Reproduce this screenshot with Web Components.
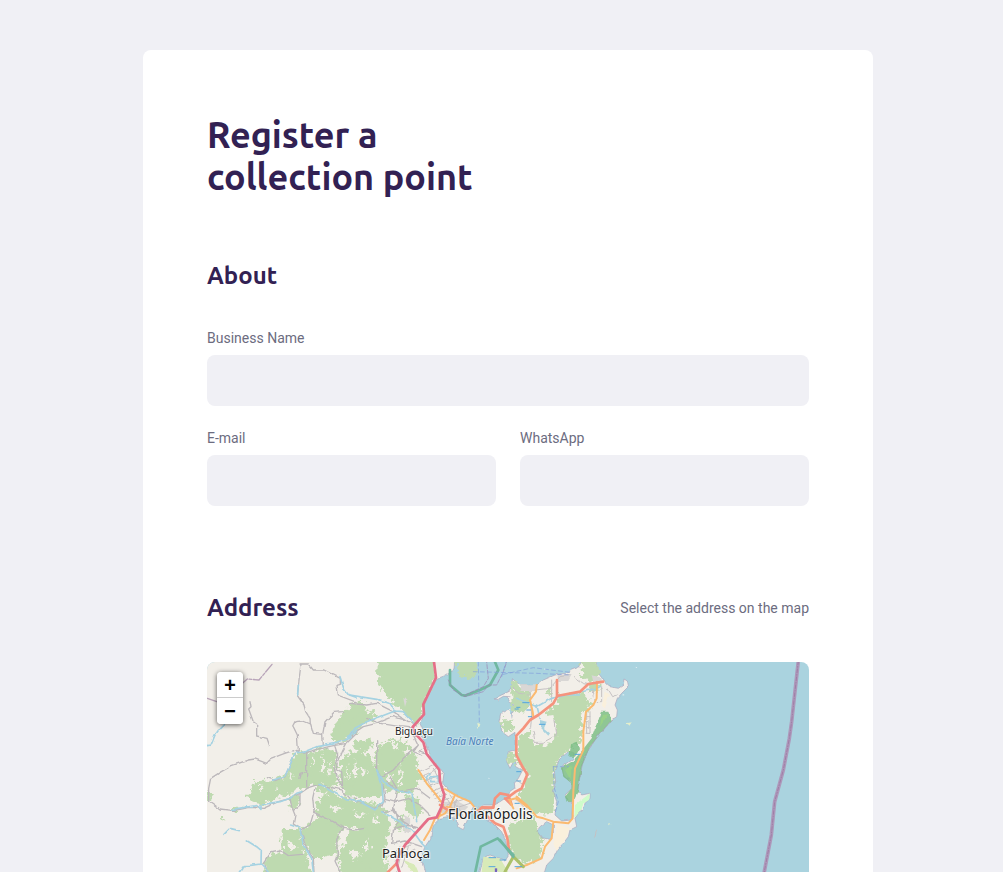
<!DOCTYPE html>
<html lang="en">
<head>
<meta charset="utf-8">
<meta name="viewport" content="width=device-width, initial-scale=1">
<title>Register a collection point</title>
<style>
  body { margin: 0; background: #f0f0f5; font-family: Roboto, "Liberation Sans", sans-serif; color: #6c6c80; }
</style>
</head>
<body>
<register-page>
  <form-section heading="About">
    <text-field label="Business Name" name="name"></text-field>
    <field-row>
      <text-field label="E-mail" name="email" type="email"></text-field>
      <text-field label="WhatsApp" name="whatsapp" type="tel"></text-field>
    </field-row>
  </form-section>
  <form-section heading="Address" hint="Select the address on the map">
    <area-map></area-map>
  </form-section>
</register-page>

<template id="t-page">
  <style>
    :host { display: block; padding: 50px 0 0 13px; }
    form { box-sizing: border-box; max-width: 730px; margin: 0 auto; padding: 64px 64px 0; background: #fff; border-radius: 8px 8px 0 0; }
    h1 { margin: 0; font: 700 36px/42px Ubuntu, Lato, sans-serif; color: #322153; }
  </style>
  <form>
    <h1>Register a<br>collection point</h1>
    <slot></slot>
  </form>
</template>

<template id="t-section">
  <style>
    :host { display: block; margin-top: 64px; }
    :host(:not(:first-of-type)) { margin-top: 88px; }
    header { display: flex; justify-content: space-between; align-items: center; margin-bottom: 40px; }
    h2 { margin: 0; font: 700 24px/28px Ubuntu, Lato, sans-serif; color: #322153; }
    span { font-size: 14px; line-height: 17px; }
    .body { display: flex; flex-direction: column; gap: 24px; }
  </style>
  <section>
    <header><h2></h2></header>
    <div class="body"><slot></slot></div>
  </section>
</template>

<template id="t-row">
  <style>
    :host { display: flex; gap: 24px; }
    ::slotted(*) { flex: 1; min-width: 0; }
  </style>
  <slot></slot>
</template>

<template id="t-field">
  <style>
    :host { display: flex; flex-direction: column; gap: 8px; }
    label { font-size: 14px; line-height: 17px; }
    input { box-sizing: border-box; width: 100%; height: 51px; padding: 16px 24px; border: 0; border-radius: 8px; background: #f0f0f5; font: 16px Roboto, sans-serif; color: #6c6c80; }
  </style>
  <label for="field"></label>
  <input id="field">
</template>

<template id="t-zoom">
  <style>
    :host { display: block; width: 26px; border-radius: 4px; box-shadow: 0 1px 5px rgba(0,0,0,.65); }
    button { display: block; box-sizing: border-box; width: 26px; height: 26px; padding: 4px 0 0; border: 0; background: #fff; color: #000; font: 700 20px/22px "Liberation Mono", monospace; cursor: pointer; }
    button:first-of-type { border-bottom: 1px solid #ccc; border-radius: 4px 4px 0 0; }
    button:last-of-type { border-radius: 0 0 4px 4px; }
  </style>
  <button type="button" title="Zoom in">+</button>
  <button type="button" title="Zoom out">−</button>
</template>

<template id="t-map">
  <style>
    :host { display: block; position: relative; height: 210px; overflow: hidden; border-radius: 8px 8px 0 0; background: #aad3df; }
    svg { display: block; width: 100%; height: 100%; }
    zoom-control { position: absolute; left: 10px; top: 10px; }
    g { fill: none; stroke-linecap: round; stroke-linejoin: round; }
    text { font-family: "Noto Sans", sans-serif; fill: #222; stroke: #fff; stroke-opacity: .7; stroke-width: 2px; paint-order: stroke; }
    .land { fill: #f2efe9; }
    .wood { fill: #bedab0; stroke: #bedab0; stroke-width: 12; }
    .water { fill: #aad3df; }
    .coast { stroke: #aaa4bb; stroke-width: 2; }
    .river { stroke: #a5d2e2; stroke-width: 5; }
    .minor { stroke: #bcb8bb; stroke-width: 4; }
    .street { stroke: #c5c1c2; stroke-width: 3; }
    .orange { stroke: #fbba70; stroke-width: 6; }
    .red { stroke: #f5937d; stroke-width: 8; }
    .trunk { stroke: #e56f88; stroke-width: 8; }
    .border { stroke: #b8a4b9; stroke-width: 4; stroke-dasharray: 30 5 8 5; }
    .ferry { stroke: #829fdc; stroke-width: 2; stroke-dasharray: 12 9; }
    .reserve { stroke: #70b8a0; stroke-width: 8; }
    .marsh { stroke: #55a6dc; stroke-width: 3; }
  </style>
  <svg role="img" aria-label="Map of Florianópolis">
    <defs>
      <filter id="rough" x="-5%" y="-5%" width="110%" height="110%">
        <feTurbulence type="fractalNoise" baseFrequency=".07" numOctaves="4" seed="8" result="n"/>
        <feDisplacementMap in="SourceGraphic" in2="n" scale="34" xChannelSelector="R" yChannelSelector="G"/>
      </filter>
      <filter id="wiggle" x="-5%" y="-5%" width="110%" height="110%">
        <feTurbulence type="fractalNoise" baseFrequency=".04" numOctaves="2" seed="3" result="n"/>
        <feDisplacementMap in="SourceGraphic" in2="n" scale="10" xChannelSelector="R" yChannelSelector="G"/>
      </filter>
    </defs>
    <g transform="translate(-7 -7) scale(.333333)">
      <g filter="url(#wiggle)">
        <path class="land coast" d="M0 0H765L762 45 735 62 708 72 690 110 672 140 668 185 660 205 668 225 655 238 675 260 685 290 695 315 720 340 732 355 728 385 745 405 775 425 800 435 822 452 815 465 800 500 790 524 778 518 765 490 745 485 720 490 700 510 692 550 675 575 665 600 652 615 670 625 682 670H0Z"/>
        <path class="land coast" d="M938 72 960 90 990 88 1005 95 1030 75 1065 60 1100 55 1115 45 1140 35 1145 10H1188L1190 45 1205 65 1215 80 1230 95 1255 100 1270 90 1272 72 1282 78 1285 95 1265 115 1252 130 1245 150 1252 165 1250 185 1235 195 1210 225 1185 255 1162 290 1145 330 1137 370 1133 405 1145 420 1170 415 1170 430 1155 445 1150 465 1135 475 1125 490 1130 515 1110 525 1105 545 1090 565 1075 580 1060 610 1040 630 1028 670H835L850 610 870 600 915 615 925 600 918 560 905 530 880 505 850 490 835 465 850 450 880 450 900 440 918 428 930 412 945 402 943 385 955 370 968 345 950 335 945 312 930 340 920 320 925 290 945 285 945 232 925 245 905 230 900 190 910 175 935 190 942 150 925 140 920 118 935 95Z"/>
        <path class="land coast" d="M930 108 900 122 882 132 893 134 910 124 930 125M930 160 902 175 897 200 915 217 940 220"/>
      </g>
      <g filter="url(#rough)">
        <path class="wood" d="M165 385 215 382 255 370 275 335 292 293 318 300V390L290 400 260 415 225 425 185 442 160 437 152 420ZM328 297 360 289 395 289 405 300 402 335 408 390 390 390 365 380 328 390ZM450 160 490 150 472 225 430 256 410 260 400 240 413 205 440 170ZM430 315 455 295 500 305 525 340 545 395 540 420 480 420 440 415 425 390ZM360 430 400 424 465 440 530 450 560 480 565 530 520 542 470 512 420 508 355 480ZM350 495 400 505 425 520 410 545 408 590 370 600 340 600 315 560 310 530ZM255 525 292 525 303 570 335 670H205L196 625 215 605 255 595 250 550ZM455 530 500 530 520 560 550 600 560 670H430L418 600 442 560Z"/>
        <path class="wood" d="M540 10H696L700 68 664 145 664 180 650 200 630 188 600 150 570 125 550 100 537 60ZM540 275 580 255 622 272 640 295 650 320 645 345 660 370 638 390 600 404 560 400 535 350 530 300ZM455 190 510 172 525 188 480 208 455 230ZM465 265 508 256 508 275 485 295ZM455 320 480 335 525 355 540 395 500 420 455 405ZM505 465 556 488 556 550 520 540 500 495ZM585 387 645 392 632 408 590 408ZM620 432 650 435 664 468 648 482 630 475ZM595 492 620 500 606 524 590 516ZM22 410 30 412 28 428H22ZM276 430 295 425 286 450 278 460ZM520 540 556 555 540 645 520 665 490 620ZM458 148 485 150 480 165 463 158ZM355 392 390 404 405 412 365 409Z"/>
        <path fill="#bedab0" d="M66 488 75 490 70 497ZM100 455 125 455 120 468H98Z"/>
        <path class="wood" d="M775 15H832L824 48 810 62 798 64 782 50ZM942 82 960 106 990 108 985 148 962 172 944 158ZM962 248 986 240 997 272 1045 278 1075 250 1070 205 1035 182 1075 155 1080 128 1145 120 1167 140 1162 160 1148 165 1136 200 1140 255 1105 276 1066 316 1056 360 1060 445 1055 470 1005 474 975 435 958 418 980 400 990 360 960 320 955 285ZM1148 15H1182L1194 58 1170 74 1153 62ZM935 510 1000 492 1010 530 1024 560 1018 602 982 622 945 600 930 555ZM908 195 928 202 936 215 915 228ZM928 300 942 300 942 320 928 320ZM1050 105 1045 118ZM1170 92 1194 90 1186 105H1172Z"/>
      </g>
      <g filter="url(#rough)">
        <path fill="#f2efe9" d="M182 385 190 402 184 410ZM230 382 236 400 229 411ZM270 348 278 370 269 381ZM340 290 345 330 336 340ZM370 290 376 338 365 350ZM388 320 392 350 383 365ZM440 330 447 350 439 380ZM465 315 473 360 460 370ZM390 450 430 460 400 469ZM460 470 495 480 470 492ZM260 555 284 575 272 587ZM450 585 484 600 458 612ZM500 550 510 585 490 595ZM560 345 575 368 562 385ZM600 325 610 375 596 395ZM620 275 634 290 616 305ZM1010 230 1035 225 1025 245ZM580 250 590 285 574 270ZM480 330 500 350 484 360ZM525 480 540 510 520 500Z"/>
      </g>
      <g filter="url(#wiggle)">
        <path fill="#f2efe9" d="M995 190 1060 180 1070 220 1040 262 1010 255Z"/>
        <path fill="#faf0dc" d="M1215 110 1227 120 1215 160 1205 155ZM1072 510 1110 515 1100 545 1070 585 1060 570Z"/>
        <path fill="#d9d7d5" d="M958 88H1010V108H965ZM1072 60H1115L1105 78H1075ZM1175 60 1205 68 1205 82 1180 80ZM842 452 880 450 875 470 845 468ZM730 440 775 440 805 455 780 480 725 475ZM612 480 630 490 632 535 610 530ZM610 130 622 132 615 155Z"/>
        <path class="water coast" d="M1105 290 1078 313 1066 345 1070 380 1060 410 1070 440 1065 480 1085 498 1115 495 1118 440 1105 440 1095 420 1115 400 1115 385 1090 360 1085 335 1120 310 1122 295ZM1020 515 1040 500 1060 510 1060 540 1050 553 1025 548 1012 530Z"/>
        <path class="water" d="M1020 195 1040 200 1032 220 1050 235 1045 242 1020 215Z"/>
        <path fill="#76bb80" fill-opacity=".8" d="M1203 170 1225 170 1235 195 1210 225 1170 275 1145 335 1134 410 1120 440 1100 440 1095 425 1115 400 1115 385 1090 365 1083 338 1115 320 1140 295 1175 250ZM1110 268 1130 260 1140 280 1125 305 1105 305Z"/>
        <path fill="#98d188" d="M1095 345 1115 330 1112 375ZM1205 180 1225 178 1200 215Z"/>
        <path fill="#cffccb" d="M1125 450 1170 415 1167 435 1150 445 1145 465 1123 488Z"/>
        <path fill="#d8eab8" d="M610 615 645 628 655 651H635ZM850 605 900 610 925 651H845Z"/>
        <path fill="#e4efcb" d="M832 200 842 205 835 223ZM1275 205 1295 202 1288 212ZM1228 502 1234 508 1224 514Z"/>
      </g>
      <g filter="url(#wiggle)">
        <path class="minor" d="M300 27 325 27 340 45 372 45 395 57 421 70 421 88 408 92 412 120 465 140M303 27 297 75 292 122 312 150 317 170 330 190 331 207M278 213 285 200 310 198 332 207 340 235 368 238 375 200 402 172 428 170M280 215 292 240 295 285M368 238 370 272M150 137 153 155 146 162 160 200 170 208 170 243 188 247 201 250 208 270M26 437 26 400 32 370 60 352 95 332 145 315 165 312 200 325 215 310 250 297 290 283M26 437 60 462 100 467 150 457 190 460 235 440 265 432 300 415 325 398 355 388 425 405 450 430 470 430M202 368 225 377 255 365 270 330 290 284 310 295 360 281 400 272 440 265 470 235M320 290 320 395M320 350 300 355 297 370M405 275 413 300 405 335 412 370 430 400M440 265 427 290 415 320 412 345 425 350 428 400M345 398 338 430 342 470 330 510 305 523M270 430 275 455 285 480 280 507 300 520 320 580 340 610 342 651M282 465 300 450 300 418M342 472 400 500 430 520 465 525 490 520M428 522 410 550 412 600 405 618 420 651M305 598 265 602 240 585 215 590 190 625 200 651"/>
        <path class="minor" d="M450 242 490 215 530 205 580 185 630 200 650 210M450 145 500 150 530 145 580 170 625 200M500 190 540 205 600 215 645 220M530 260 530 345 545 365 580 345 610 310 650 275M530 345 550 395 555 430 545 455 520 460 490 445 450 435M555 430 590 440 625 430 660 450 690 480M560 380 595 410 650 400 690 430M570 365 590 400 580 470 610 500 645 520M545 470 585 465 595 500 580 525 575 565M575 565 615 558 665 575M585 520 625 510 660 520M680 275 660 290 685 300M640 240 655 270 640 290 665 300"/>
        <path class="street" d="M660 350 710 325M665 365 715 340M672 380 728 355M685 395 728 380M695 410 730 395M700 420 735 405M705 430 740 418M715 440 750 430M675 360 700 410M700 340 725 390M735 420 770 480M750 420 790 480M740 450 800 430M735 470 810 445M770 430 760 500M580 595 640 565M585 615 645 585M600 610 590 651M625 575 605 640M835 455 870 475M850 470 880 452M565 605 600 575"/>
        <path class="street" d="M940 100 960 115 985 120M990 110 995 180 992 220M1005 105 1050 100 1080 65 1110 60M1055 75 1055 140M1120 65 1150 85 1170 90M1160 170V235M1170 170V235M1158 185H1170M1158 200H1170M1158 215H1170M1158 235H1170M1175 100 1183 140H1205V95M1000 230 1005 262 1030 262 1070 240 1065 195M1220 100 1235 125 1250 120M950 375 970 390 962 410M945 430 970 455M1190 525 1185 545"/>
        <path class="coast" stroke-dasharray="8 5" d="M1240 190 1210 225 1185 255 1162 290 1147 330 1139 370 1135 400"/>
      </g>
      <g filter="url(#wiggle)">
        <path class="river" d="M420 65 430 97 448 120 468 127M22 272 33 270 45 240 60 220 75 205M72 538 90 520 118 527M142 558 170 575 184 587 183 627 145 632 132 632 118 651M183 627 205 651M96 463 150 455 170 452 180 463 180 450 240 440 270 430 290 415 305 410M218 376 255 363 270 330 288 288 310 292 350 275 410 265 450 250 470 225M293 120 295 90M272 510 300 520 310 570 335 610 340 651"/>
        <path class="river" d="M450 120 530 133 570 145 585 168 540 185 500 200 465 220 445 250M585 168 610 170 645 205M530 345 555 385 595 410 635 410 640 440 650 500M530 345 545 385 550 440 525 465 480 440 440 435 400 410 360 385M545 470 600 500 640 530 665 565 680 580M690 355 675 380M950 130 1010 155 1055 130 1100 120 1170 105 1200 95M1010 150 1020 190M1080 120 1135 120"/>
        <path class="river" d="M692 365H715V380H692Z"/>
      </g>
      <path class="orange" d="M655 345 680 385 705 415 723 440M735 402 775 425 810 440 830 465M764 422 750 455 735 475M735 475 705 490 690 525 672 555M730 450 715 490M740 455 765 463 775 480M1010 90 1008 110 990 135 998 170 1000 185M1191 80 1190 130 1180 150 1158 170 1150 230 1150 285 1125 340 1120 410 1118 490 1105 505 1060 500 1030 490 1010 485 980 450 950 425M1060 500 1055 550 1035 575 1025 610 980 630 950 640"/>
      <path class="red" d="M1071 75V125L1060 145 1015 180 990 195 970 220 949 242 949 300 970 340 982 358 965 400 947 410 920 430M1071 123 1140 110 1165 87 1210 80M835 468 845 457 880 458 885 430 900 415 925 420 935 450 915 430M860 482 885 505 910 515 922 550 928 590 940 605M720 450 740 463M560 655 590 625"/>
      <path class="orange" d="M928 435 948 430 980 455M928 435 940 460"/>
      <path stroke="#abc06a" stroke-width="9" d="M940 605 915 650M940 605 970 635"/>
      <path class="trunk" d="M702 21 708 68 670 148 672 178 638 216 645 235 670 262 680 297 718 345 720 380 733 420 725 455 710 487 685 492 615 570 595 605 590 625 600 655"/>
      <path class="border" d="M216 28 177 75 142 72 110 100M22 130 65 145"/>
      <path stroke="#ad99bb" stroke-width="11" d="M1795 18 1775 200 1768 250 1750 345 1724 440 1714 540 1692 655"/>
      <path stroke="#996f9c" stroke-width="2" stroke-dasharray="11 5 3 5" d="M1795 18 1775 200 1768 250 1750 345 1724 440 1714 540 1692 655"/>
      <path class="reserve" d="M750 45 750 90 785 120 795 122 840 105 870 90 895 45 885 21M825 655 842 575 893 550 940 600M900 555 940 605"/>
      <path stroke="#9d80b2" stroke-width="2" stroke-dasharray="12 5" d="M745 75 760 105 795 125 850 110 865 90 890 90 910 50 920 21M795 120 850 95 865 70 860 21"/>
      <path class="ferry" d="M835 21 838 200M820 50 1010 55 1110 60M905 65 918 21M910 58 1000 38 1110 52M1060 335 1062 395 1075 440 1065 475M1060 335H1105"/>
      <path class="marsh" d="M968 143H988M950 157H960M980 165H992M985 185H995M945 162H955M1018 208H1035M950 350H962M950 378H962M945 445H958M867 608H887M900 615H918M945 635H965M867 635H885M1125 298H1140"/>
      <path stroke="#7564bd" stroke-width="7" stroke-linecap="butt" d="M888 640V660"/>
      <path fill="#fff" fill-opacity=".65" d="M1268 116 1274 120 1268 122ZM1032 40 1038 42 1033 45ZM1307 35 1312 37 1308 40ZM865 368 870 370 866 372Z"/>
    </g>
    <text x="188" y="73" font-size="10">Biguaçu</text>
    <text x="239" y="83" font-size="10" font-style="italic" style="fill:#4b80ba;stroke-opacity:.25">Baía Norte</text>
    <text x="241" y="157" font-size="14">Florianópolis</text>
    <text x="175" y="196" font-size="13">Palhoça</text>
  </svg>
  <zoom-control></zoom-control>
</template>

<script>
  class TemplateElement extends HTMLElement {
    constructor() {
      super();
      const template = document.getElementById(this.constructor.template);
      this.attachShadow({ mode: "open" }).append(template.content.cloneNode(true));
    }
  }
  class RegisterPage extends TemplateElement { static template = "t-page"; }
  class FieldRow extends TemplateElement { static template = "t-row"; }
  class ZoomControl extends TemplateElement { static template = "t-zoom"; }
  class AreaMap extends TemplateElement { static template = "t-map"; }
  class FormSection extends TemplateElement {
    static template = "t-section";
    connectedCallback() {
      this.shadowRoot.querySelector("h2").textContent = this.getAttribute("heading");
      const hint = this.getAttribute("hint");
      if (hint && !this.shadowRoot.querySelector("span")) {
        const span = document.createElement("span");
        span.textContent = hint;
        this.shadowRoot.querySelector("header").append(span);
      }
    }
  }
  class TextField extends TemplateElement {
    static template = "t-field";
    connectedCallback() {
      const input = this.shadowRoot.querySelector("input");
      this.shadowRoot.querySelector("label").textContent = this.getAttribute("label");
      input.name = this.getAttribute("name");
      input.type = this.getAttribute("type") || "text";
    }
  }
  customElements.define("register-page", RegisterPage);
  customElements.define("form-section", FormSection);
  customElements.define("field-row", FieldRow);
  customElements.define("text-field", TextField);
  customElements.define("zoom-control", ZoomControl);
  customElements.define("area-map", AreaMap);
</script>
</body>
</html>
